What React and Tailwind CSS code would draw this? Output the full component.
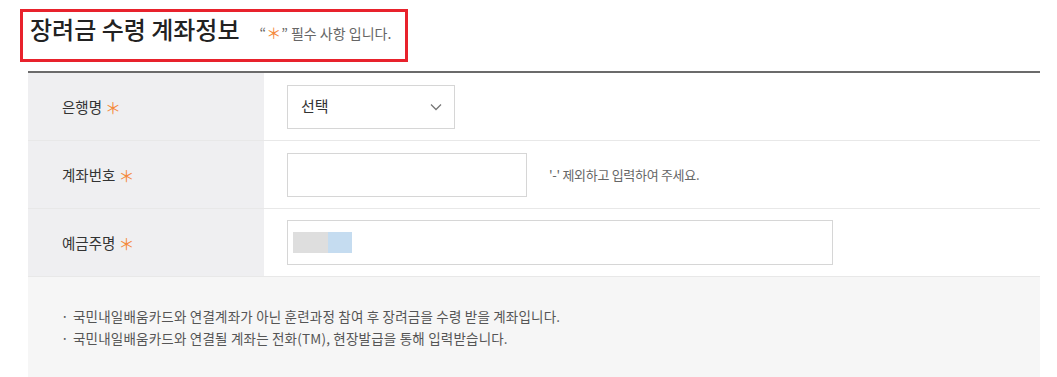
const font = { fontFamily: '"Noto Sans CJK KR", "Noto Sans", sans-serif' };

const Star = () => <span className="text-[#f58a3c] ml-[3px] text-[16px]">＊</span>;

const rows = [
  { label: '은행명', kind: 'select' },
  { label: '계좌번호', kind: 'account' },
  { label: '예금주명', kind: 'owner' },
];

const notes = [
  '국민내일배움카드와 연결계좌가 아닌 훈련과정 참여 후 장려금을 수령 받을 계좌입니다.',
  '국민내일배움카드와 연결될 계좌는 전화(TM), 현장발급을 통해 입력받습니다.',
];

export default function App() {
  return (
    <div className="w-[1057px] h-[377px] bg-white overflow-hidden" style={font}>
      {/* title box */}
      <div className="pt-[9px] pl-[20px]">
        <div className="w-[388px] h-[53px] border-[3px] border-[#e8222c] flex items-baseline pl-[7px] pt-[5px]">
          <h2 className="text-[24px] leading-none font-medium text-[#222]">장려금 수령 계좌정보</h2>
          <span className="ml-[20px] text-[14px] leading-none text-[#666]">
            “<span className="text-[#f58a3c] text-[15px]">＊</span>” 필수 사항 입니다.
          </span>
        </div>
      </div>

      <div className="ml-[28px] w-[1012px] mt-[9px] border-t-2 border-[#6b6b6b]">
        {rows.map((row) => (
          <div key={row.label} className="flex h-[68px] border-b border-[#e8e8e8]">
            <div className="w-[236px] bg-[#efeff1] flex items-center pl-[34px] text-[14.5px] text-[#333]">
              {row.label}
              <Star />
            </div>
            <div className="flex-1 flex items-center pl-[23px]">
              {row.kind === 'select' && (
                <div className="w-[168px] h-[44px] border border-[#d6d6d6] flex items-center justify-between pl-[13px] pr-[12px] text-[15px] text-[#333]">
                  선택
                  <svg width="12" height="8" viewBox="0 0 12 8" fill="none" stroke="#777" strokeWidth="1.3">
                    <path d="M1 1.5l5 5 5-5" />
                  </svg>
                </div>
              )}
              {row.kind === 'account' && (
                <>
                  <div className="w-[240px] h-[44px] border border-[#d6d6d6]" />
                  <span className="ml-[22px] text-[13px] text-[#666] tracking-[-0.3px]">'-' 제외하고 입력하여 주세요.</span>
                </>
              )}
              {row.kind === 'owner' && (
                <div className="w-[546px] h-[45px] border border-[#d6d6d6] flex items-center pl-[5px]">
                  <span className="w-[35px] h-[21px] bg-[#dedede]" />
                  <span className="w-[24px] h-[21px] bg-[#c5dcf0]" />
                </div>
              )}
            </div>
          </div>
        ))}

        <div className="bg-[#f6f6f6] h-[110px] pt-[28px] pl-[33px] text-[13.5px] text-[#555] tracking-[0.2px]">
          {notes.map((n) => (
            <div key={n} className="flex h-[22px] items-center">
              <span className="w-[12px]">·</span>
              <span>{n}</span>
            </div>
          ))}
        </div>
      </div>
    </div>
  );
}
